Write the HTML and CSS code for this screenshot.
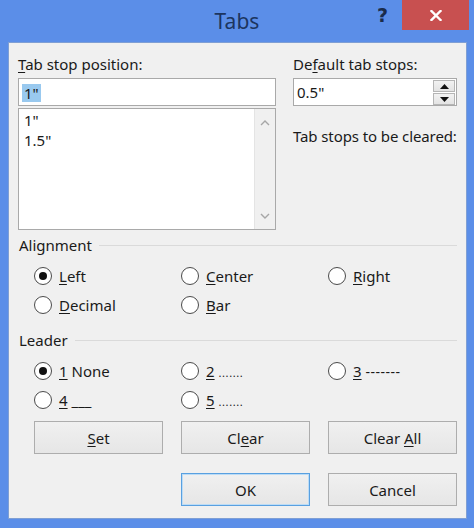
FILE: index.html
```html
<!DOCTYPE html>
<html lang="en">
<head>
<meta charset="utf-8">
<title>Tabs</title>
<link rel="stylesheet" href="styles.css">
</head>
<body>
<div class="window">
  <header class="titlebar">
    <div class="tb-left"></div>
    <div class="title">Tabs</div>
    <div class="tb-right">
      <span class="help">?</span>
      <button class="close" aria-label="Close">
        <svg width="12" height="11" viewBox="0 0 12 11"><path d="M1.5 1 L10.5 10 M10.5 1 L1.5 10" stroke="#fff" stroke-width="2.4" stroke-linecap="square" fill="none"/></svg>
      </button>
    </div>
  </header>
  <main class="panel">
    <section class="top">
      <div class="col-left">
        <div class="label"><u>T</u>ab stop position:</div>
        <div class="input"><span class="sel">1"</span></div>
        <div class="listbox">
          <div class="items">
            <div class="item">1"</div>
            <div class="item">1.5"</div>
          </div>
          <div class="scrollbar">
            <svg width="10" height="6" viewBox="0 0 10 6"><path d="M1 5 L5 1 L9 5" stroke="#a6a6a6" stroke-width="1.4" fill="none"/></svg>
            <svg width="10" height="6" viewBox="0 0 10 6"><path d="M1 1 L5 5 L9 1" stroke="#a6a6a6" stroke-width="1.4" fill="none"/></svg>
          </div>
        </div>
      </div>
      <div class="col-right">
        <div class="label">De<u>f</u>ault tab stops:</div>
        <div class="spin">
          <span class="spin-val">0.5"</span>
          <div class="spin-btns">
            <div class="spin-btn"><svg width="9" height="5" viewBox="0 0 9 5"><path d="M0 5 L4.5 0 L9 5 Z" fill="#111"/></svg></div>
            <div class="spin-btn"><svg width="9" height="5" viewBox="0 0 9 5"><path d="M0 0 L4.5 5 L9 0 Z" fill="#111"/></svg></div>
          </div>
        </div>
        <div class="label cleared">Tab stops to be cleared:</div>
      </div>
    </section>

    <section class="group">
      <div class="group-head"><span>Alignment</span><i class="rule"></i></div>
      <div class="options">
        <div class="opt"><span class="radio on"></span><span><u>L</u>eft</span></div>
        <div class="opt"><span class="radio"></span><span><u>C</u>enter</span></div>
        <div class="opt"><span class="radio"></span><span><u>R</u>ight</span></div>
        <div class="opt"><span class="radio"></span><span><u>D</u>ecimal</span></div>
        <div class="opt"><span class="radio"></span><span><u>B</u>ar</span></div>
      </div>
    </section>

    <section class="group leader">
      <div class="group-head"><span>Leader</span><i class="rule"></i></div>
      <div class="options">
        <div class="opt"><span class="radio on"></span><span><u>1</u> None</span></div>
        <div class="opt"><span class="radio"></span><span><u>2</u> <span class="dots">.......</span></span></div>
        <div class="opt"><span class="radio"></span><span><u>3</u> <span class="dashes">-------</span></span></div>
        <div class="opt"><span class="radio"></span><span><u>4</u> <span class="under">___</span></span></div>
        <div class="opt"><span class="radio"></span><span><u>5</u> <span class="dots">.......</span></span></div>
      </div>
    </section>

    <section class="buttons">
      <button class="btn"><u>S</u>et</button>
      <button class="btn">Cl<u>e</u>ar</button>
      <button class="btn">Clear <u>A</u>ll</button>
      <button class="btn default">OK</button>
      <button class="btn">Cancel</button>
    </section>
  </main>
</div>
</body>
</html>
```

FILE: styles.css
```css
* { box-sizing: border-box; }
html, body { margin: 0; padding: 0; }
body {
  width: 474px;
  height: 528px;
  background: #5b8ee8;
  font-family: "Noto Sans", "Open Sans", sans-serif;
  font-size: 15px;
  color: #1a1a1a;
  overflow: hidden;
}
.window {
  display: flex;
  flex-direction: column;
  height: 528px;
}
.titlebar {
  height: 42px;
  display: grid;
  grid-template-columns: 1fr auto 1fr;
  align-items: start;
}
.title {
  font-size: 21px;
  line-height: 42px;
  color: #1c3560;
}
.tb-right {
  display: flex;
  justify-content: flex-end;
  align-items: flex-start;
  padding-right: 5px;
}
.help {
  font-family: "DejaVu Sans", sans-serif;
  font-weight: bold;
  font-size: 19px;
  line-height: 30px;
  color: #1a2c4c;
  margin-right: 14px;
}
.close {
  width: 67px;
  height: 30px;
  border: 0;
  padding: 0;
  background: #c85050;
  display: flex;
  align-items: center;
  justify-content: center;
}
.panel {
  margin: 0 7px 0 8px;
  height: 477px;
  background: #f0f0f0;
  border: 1px solid #7f9fd4;
  padding: 11px 9px 10px 9px;
  display: flex;
  flex-direction: column;
}
.label { line-height: 20px; height: 20px; white-space: nowrap; }
u { text-decoration: underline; text-underline-offset: 2px; }
.top {
  display: flex;
  gap: 17px;
}
.col-left { width: 258px; flex: none; display: flex; flex-direction: column; }
.col-right { flex: 1; min-width: 0; display: flex; flex-direction: column; }
.input {
  margin-top: 4px;
  height: 28px;
  background: #fff;
  border: 1px solid #a9a9a9;
  padding: 4px 0 0 3px;
}
.sel {
  display: inline-block;
  background: #99c9ef;
  line-height: 18px;
  padding: 0 2px;
}
.listbox {
  margin-top: 2px;
  height: 122px;
  background: #fff;
  border: 1px solid #a9a9a9;
  display: flex;
}
.items { flex: 1; padding: 1px 0 0 5px; }
.item { line-height: 20px; }
.scrollbar {
  width: 21px;
  background: #f0f0f0;
  border-left: 1px solid #e4e4e4;
  display: flex;
  flex-direction: column;
  justify-content: space-between;
  align-items: center;
  padding: 11px 0 10px;
}
.spin {
  margin-top: 4px;
  height: 28px;
  background: #fff;
  border: 1px solid #a9a9a9;
  display: flex;
  justify-content: space-between;
  padding-left: 3px;
}
.spin-val { line-height: 26px; }
.spin-btns {
  display: flex;
  flex-direction: column;
  padding: 1px 1px 0 0;
}
.spin-btn {
  width: 22px;
  height: 12px;
  border: 1px solid #b5b5b5;
  background: linear-gradient(#f2f2f2, #e3e3e3);
  display: flex;
  align-items: center;
  justify-content: center;
}
.spin-btn + .spin-btn { margin-top: 1px; }
.cleared { margin-top: 20px; letter-spacing: -0.1px; }
.group { margin-top: 5px; }
.group.leader { margin-top: 11px; }
.group-head {
  display: flex;
  align-items: center;
  line-height: 20px;
  padding-left: 1px;
}
.rule {
  flex: 1;
  height: 1px;
  background: #dadada;
  margin-left: 7px;
}
.options {
  margin: 6px 0 0 16px;
  display: grid;
  grid-template-columns: repeat(3, 129px);
  column-gap: 18px;
  grid-auto-rows: 29px;
}
.opt {
  display: flex;
  align-items: center;
  gap: 7px;
  white-space: nowrap;
}
.radio {
  width: 18px;
  height: 18px;
  border-radius: 50%;
  border: 1px solid #4a4a4a;
  background: #fff;
  display: flex;
  align-items: center;
  justify-content: center;
  flex: none;
}
.radio.on::after {
  content: "";
  width: 8px;
  height: 8px;
  border-radius: 50%;
  background: #111;
}
.dots { letter-spacing: 0.6px; font-size: 11px; }
.dashes { letter-spacing: 0.5px; font-size: 14px; }
.under { letter-spacing: 0; }
.buttons {
  margin: 7px 0 0 16px;
  display: grid;
  grid-template-columns: repeat(3, 129px);
  column-gap: 18px;
  row-gap: 19px;
}
.btn {
  height: 33px;
  font: inherit;
  color: #1a1a1a;
  background: linear-gradient(#f0f0f0, #e6e6e6);
  border: 1px solid #adadad;
  padding: 0;
}
.btn.default {
  grid-column: 2;
  border-color: #59a0e0;
  box-shadow: inset 0 0 0 1px #bcdcf6;
}
```
